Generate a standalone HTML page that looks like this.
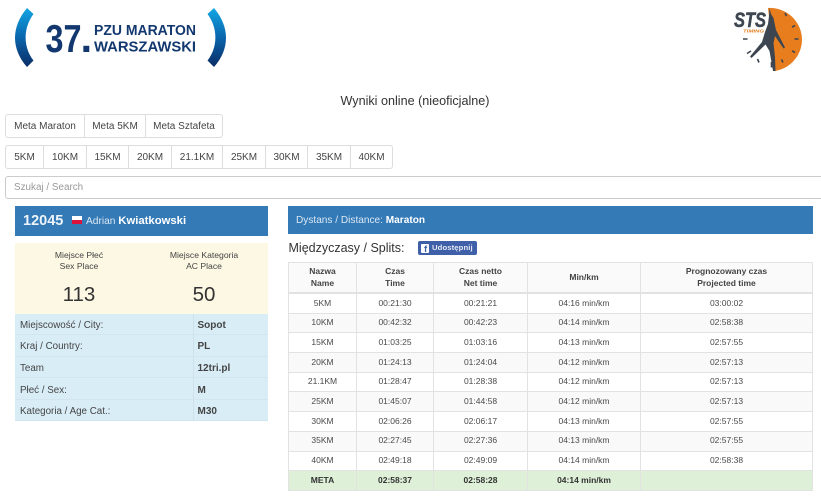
<!DOCTYPE html>
<html lang="pl">
<head>
<meta charset="utf-8">
<title>Wyniki online</title>
<style>
html,body{margin:0;padding:0;background:#fff}
body{width:821px;height:500px;position:relative;overflow:hidden;font-family:"Liberation Sans",sans-serif;color:#333}
.abs{position:absolute}
.grp{position:absolute;display:flex;box-sizing:border-box;border:1px solid #ddd;border-radius:3px;background:#fff;font-size:10px;color:#444}
.grp div{box-sizing:border-box;text-align:center;border-right:1px solid #ddd;line-height:24px;height:22px}
.grp div:last-child{border-right:0}
table{border-collapse:collapse;table-layout:fixed;position:absolute}
.splits{left:288px;top:262px;width:525px;font-size:8.5px;color:#4a4a4a}
.splits td,.splits th{border:1px solid #e2e2e2;text-align:center;padding:0;height:18.7px;line-height:11.6px}
.splits th{height:28px;padding-top:1px;font-weight:bold;background:#fafafa;border-bottom:2px solid #e2e2e2;color:#444}
.splits tr.s td{background:#f9f9f9}
.splits tr.m td{background:#dff0d8;font-weight:bold;color:#333}
.info{left:15px;top:313.5px;width:252.5px;font-size:9.8px;color:#444;background:#d9edf7}
.info td{height:17.6px;padding:3px 0 0 5px;border-bottom:1px solid #d2e6f0;box-sizing:content-box;white-space:nowrap}
.info td:first-child{border-right:1px solid #cfe2ec}
.info td:last-child{font-weight:bold;padding-left:4px;font-size:10px}
</style>
</head>
<body>

<svg class="abs" style="left:0;top:0;filter:blur(.3px)" width="240" height="80" viewBox="0 0 240 80">
<defs>
<linearGradient id="g" x1="0" y1="0" x2="0" y2="1">
<stop offset="0" stop-color="#12a6e4"/><stop offset=".45" stop-color="#0a6cb2"/><stop offset="1" stop-color="#0b2c66"/>
</linearGradient>
</defs>
<path d="M27 8 L33.5 14 C23 28 23 47 33.5 60.5 L27 67 C11 49 11 27 27 8Z" fill="url(#g)"/>
<path d="M214 8 L207.5 14 C218 28 218 47 207.5 60.5 L214 67 C230 49 230 27 214 8Z" fill="url(#g)"/>
<text x="45.5" y="52" font-family="Liberation Sans" font-weight="bold" font-size="39" fill="#12386f" textLength="36" lengthAdjust="spacingAndGlyphs">37</text>
<text x="80.5" y="52" font-family="Liberation Sans" font-weight="bold" font-size="42" fill="#12386f">.</text>
<text x="94" y="35" font-family="Liberation Sans" font-weight="bold" font-size="15.2" fill="#12386f" textLength="102" lengthAdjust="spacingAndGlyphs">PZU MARATON</text>
<text x="94" y="51.5" font-family="Liberation Sans" font-weight="bold" font-size="15.2" fill="#12386f" textLength="102" lengthAdjust="spacingAndGlyphs">WARSZAWSKI</text>
</svg>

<svg class="abs" style="left:725px;top:0;filter:blur(.3px)" width="85" height="78" viewBox="725 0 85 78">
<path d="M768 8 A32 32 0 0 1 802 40 A32 32 0 0 1 775 71Z" fill="#e87d1e"/>
<g stroke="#3d4650" stroke-width="1.6" fill="none">
<path d="M785 13l1.5 3M795 25.500l-3 1.700M798.500 39h-4M795 52.500l-3-1.700M783 62.500l-1.500-3"/>
<path d="M743 39h4.500M747 53.500l4-2.500M757.500 59l1.500 3.500M771.500 62v5.500"/>
</g>
<path d="M769.500 8 L771 14 L773.500 18 L776 30 L785 47.500 L783.500 48.500 L775 36 L773.500 43 L775 57 L775.500 71 L773 71 L769.500 51 L765.500 44.500 L751.500 58 L750 56.500 L762 42 L765 32 L768 24 L769 16Z" fill="#3d4650"/>
<text x="734" y="27" font-family="Liberation Sans" font-weight="bold" font-style="italic" font-size="21" fill="#3d4650" stroke="#3d4650" stroke-width=".5" textLength="32" lengthAdjust="spacingAndGlyphs">STS</text>
<text x="743" y="32.500" font-family="Liberation Sans" font-weight="bold" font-style="italic" font-size="4.500" fill="#e87d1e" textLength="21" lengthAdjust="spacingAndGlyphs">TIMING</text>
</svg>

<div class="abs" style="left:0;width:830px;top:93.500px;text-align:center;font-size:12.600px;line-height:15px;color:#333">Wyniki online (nieoficjalne)</div>

<div class="grp" style="left:5px;top:113.500px;width:218px;height:24px">
<div style="width:79px">Meta Maraton</div><div style="width:61px">Meta 5KM</div><div style="width:76px">Meta Sztafeta</div>
</div>

<div class="grp" style="left:5px;top:144.500px;width:388px;height:24px">
<div style="width:38px">5KM</div><div style="width:43px">10KM</div><div style="width:42px">15KM</div><div style="width:43px">20KM</div><div style="width:51px">21.1KM</div><div style="width:43px">25KM</div><div style="width:42px">30KM</div><div style="width:43px">35KM</div><div style="width:41px">40KM</div>
</div>

<div class="abs" style="left:5px;top:175.500px;width:830px;height:23px;box-sizing:border-box;border:1px solid #ccc;border-radius:3px;font-size:9.900px;line-height:22px;color:#999;padding-left:8px">Szukaj / Search</div>

<div class="abs" style="left:15px;top:206px;width:252.500px;height:30px;background:#337ab7;color:#fff">
<span class="abs" style="left:8px;top:6.500px;font-size:14.500px;line-height:17px;font-weight:bold;color:#eef4fa">12045</span>
<span class="abs" style="left:57px;top:10px;width:10px;height:4px;background:#fff"></span>
<span class="abs" style="left:57px;top:14px;width:10px;height:4px;background:#dc143c"></span>
<span class="abs" style="left:71px;top:8.500px;font-size:10.200px;line-height:13px;white-space:nowrap;color:#dce8f3">Adrian <b style="font-size:11.300px;color:#fff">Kwiatkowski</b></span>
</div>

<div class="abs" style="left:15px;top:243px;width:252.500px;height:70.500px;background:#fcf8e3;color:#444">
<div class="abs" style="top:7px;width:126px;text-align:center;font-size:8.600px;line-height:10.500px;left:1px">Miejsce Płeć<br>Sex Place</div>
<div class="abs" style="left:126px;top:7px;width:126px;text-align:center;font-size:8.600px;line-height:10.500px">Miejsce Kategoria<br>AC Place</div>
<div class="abs" style="left:1px;top:40px;width:126px;text-align:center;font-size:20.500px;line-height:24px;color:#333">113</div>
<div class="abs" style="left:126px;top:40px;width:126px;text-align:center;font-size:20.500px;line-height:24px;color:#333">50</div>
</div>

<table class="info">
<colgroup><col style="width:178px"><col></colgroup>
<tr><td>Miejscowość / City:</td><td>Sopot</td></tr>
<tr><td>Kraj / Country:</td><td>PL</td></tr>
<tr><td>Team</td><td>12tri.pl</td></tr>
<tr><td>Płeć / Sex:</td><td>M</td></tr>
<tr><td>Kategoria / Age Cat.:</td><td>M30</td></tr>
</table>

<div class="abs" style="left:288px;top:206px;width:525px;height:28px;background:#337ab7;color:#dce8f3;font-size:10.100px;line-height:29px;padding-left:8px;box-sizing:border-box">Dystans / Distance: <b style="color:#fff">Maraton</b></div>

<div class="abs" style="left:288.500px;top:240px;font-size:12.500px;line-height:16px;color:#333">Międzyczasy / Splits:</div>

<div class="abs" style="left:418px;top:241px;width:59px;height:14px;background:#3f5fa8;border-radius:2px;color:#e4e9f5;font-size:7.700px;line-height:14px;font-weight:bold;white-space:nowrap">
<span class="abs" style="left:3px;top:3px;width:8px;height:8.500px;background:#fff;border-radius:1px"></span>
<span class="abs" style="left:6px;top:3.500px;font-size:9.500px;line-height:9px;color:#3f5fa8;font-weight:bold;">f</span>
<span class="abs" style="left:14px;top:0;letter-spacing:.1px">Udostępnij</span>
</div>

<table class="splits">
<colgroup><col style="width:68px"><col style="width:77px"><col style="width:94px"><col style="width:113px"><col></colgroup>
<tr><th>Nazwa<br>Name</th><th>Czas<br>Time</th><th>Czas netto<br>Net time</th><th>Min/km</th><th>Prognozowany czas<br>Projected time</th></tr>
<tr><td>5KM</td><td>00:21:30</td><td>00:21:21</td><td>04:16 min/km</td><td>03:00:02</td></tr>
<tr class="s"><td>10KM</td><td>00:42:32</td><td>00:42:23</td><td>04:14 min/km</td><td>02:58:38</td></tr>
<tr><td>15KM</td><td>01:03:25</td><td>01:03:16</td><td>04:13 min/km</td><td>02:57:55</td></tr>
<tr class="s"><td>20KM</td><td>01:24:13</td><td>01:24:04</td><td>04:12 min/km</td><td>02:57:13</td></tr>
<tr><td>21.1KM</td><td>01:28:47</td><td>01:28:38</td><td>04:12 min/km</td><td>02:57:13</td></tr>
<tr class="s"><td>25KM</td><td>01:45:07</td><td>01:44:58</td><td>04:12 min/km</td><td>02:57:13</td></tr>
<tr><td>30KM</td><td>02:06:26</td><td>02:06:17</td><td>04:13 min/km</td><td>02:57:55</td></tr>
<tr class="s"><td>35KM</td><td>02:27:45</td><td>02:27:36</td><td>04:13 min/km</td><td>02:57:55</td></tr>
<tr><td>40KM</td><td>02:49:18</td><td>02:49:09</td><td>04:14 min/km</td><td>02:58:38</td></tr>
<tr class="m"><td>META</td><td>02:58:37</td><td>02:58:28</td><td>04:14 min/km</td><td></td></tr>
</table>

</body>
</html>
